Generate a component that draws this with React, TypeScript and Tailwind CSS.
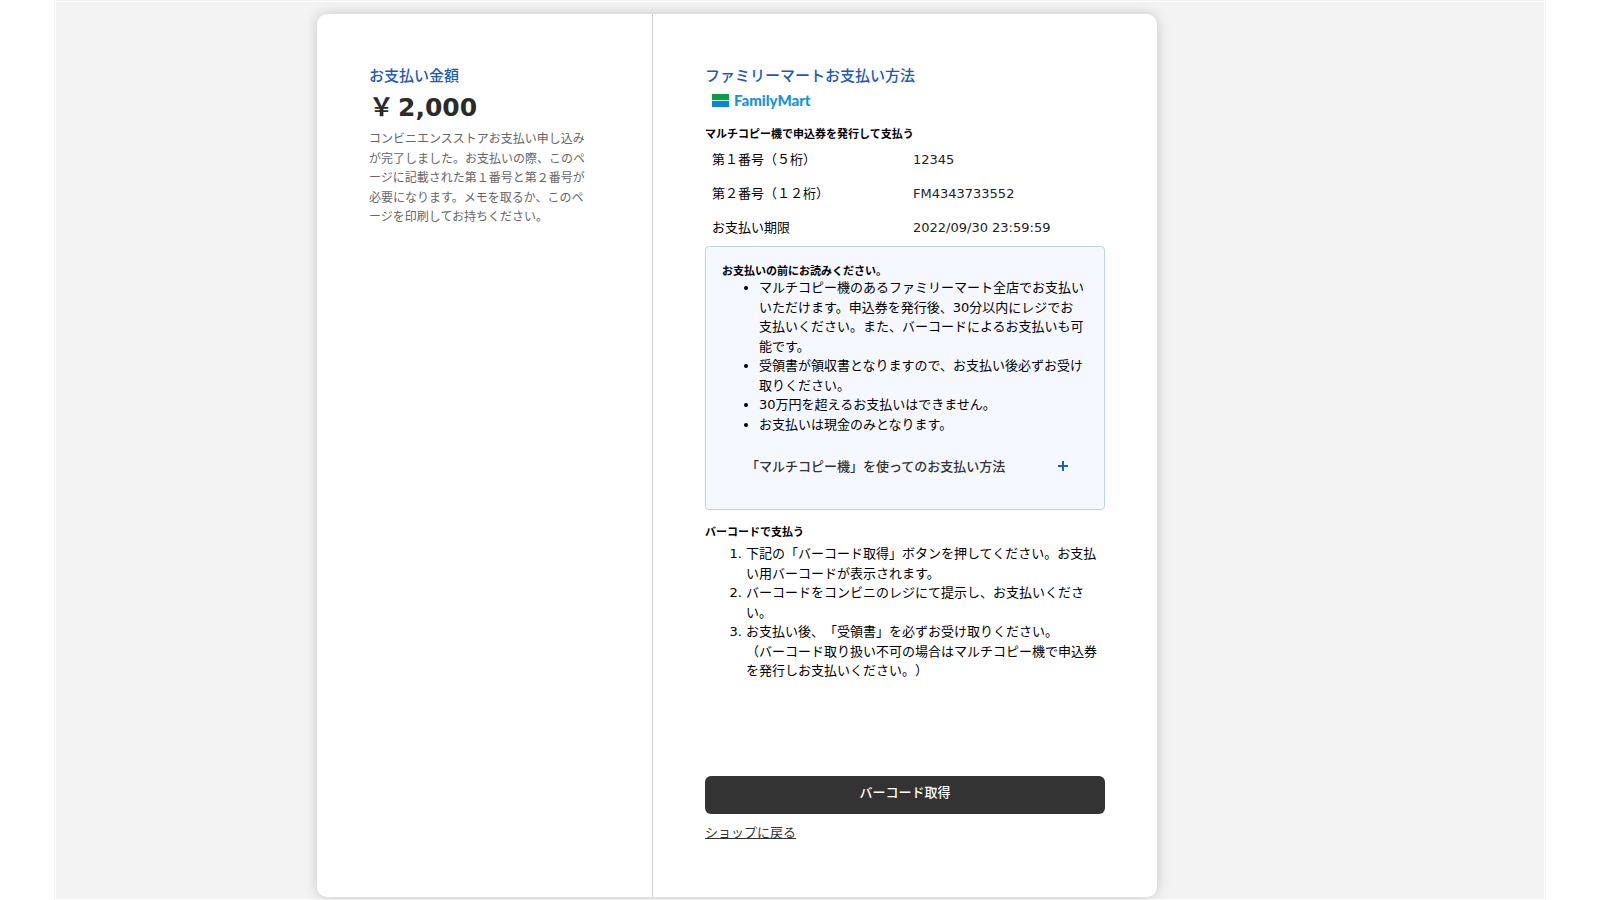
import { useState } from "react";

const paymentRows = [
  { label: "第１番号（５桁）", value: "12345" },
  { label: "第２番号（１２桁）", value: "FM4343733552" },
  { label: "お支払い期限", value: "2022/09/30 23:59:59" },
];

const notes = [
  "マルチコピー機のあるファミリーマート全店でお支払いいただけます。申込券を発行後、30分以内にレジでお支払いください。また、バーコードによるお支払いも可能です。",
  "受領書が領収書となりますので、お支払い後必ずお受け取りください。",
  "30万円を超えるお支払いはできません。",
  "お支払いは現金のみとなります。",
];

function FamilyMartLogo() {
  return (
    <div className="flex h-[26px] items-center gap-[5px] pl-[7px]">
      <svg width="17" height="13" viewBox="0 0 17 13" aria-hidden="true">
        <rect width="17" height="6" fill="#0a9f45" />
        <rect y="6" width="17" height="1" fill="#cfe9ea" />
        <rect y="7" width="17" height="6" fill="#0887d5" />
      </svg>
      <span className="font-['Lato',sans-serif] text-[15px] leading-5 font-black text-[#1593d8]">
        FamilyMart
      </span>
    </div>
  );
}

function NoticeBox() {
  const [open, setOpen] = useState(false);

  return (
    <div className="mt-px rounded border border-[#bdd5e3] bg-[#f5f8ff] px-4 pt-[19px] pb-[22px]">
      <h3 className="text-[11px] leading-3 font-bold">お支払いの前にお読みください。</h3>
      <ul className="list-disc pr-1 pl-[37px] leading-normal">
        {notes.map((note) => (
          <li key={note}>{note}</li>
        ))}
      </ul>
      <button
        type="button"
        aria-expanded={open}
        onClick={() => setOpen(!open)}
        className="mt-[13px] flex h-10 w-full items-center justify-between pr-5 pl-6 text-left font-medium text-[#333]"
      >
        <span>「マルチコピー機」を使ってのお支払い方法</span>
        <svg className="mb-0.5" width="10" height="10" viewBox="0 0 10 10" aria-hidden="true">
          <path d="M0 5h10M5 0v10" fill="none" stroke="#1d5fbf" strokeWidth="2" />
        </svg>
      </button>
    </div>
  );
}

export default function App() {
  return (
    <div
      lang="ja"
      className="min-h-screen bg-white px-[54px] font-['DejaVu_Sans','Noto_Sans_CJK_JP',sans-serif] text-[13px] text-black [text-spacing-trim:space-all]"
    >
      <div className="min-h-screen border border-[#f3f3f3] p-px">
        <div className="grid grid-cols-[261fr_840fr_387fr] bg-[#f3f3f3] pt-3 pb-0.5">
          <main className="col-start-2 flex rounded-[10px] bg-white shadow-[0_0_14px_rgba(0,0,0,0.18)]">
            <section className="w-2/5 border-r border-[#cfcfcf] pt-[51px] pr-16 pl-[52px]">
              <h2 className="text-[15px] leading-[22px] font-medium text-[#1a5ab8]">お支払い金額</h2>
              <p className="flex gap-1 text-[25px] leading-[42px] font-bold text-[#2b2b2b]">
                <span>￥</span>
                <span>2,000</span>
              </p>
              <p className="mt-px text-xs leading-relaxed break-all text-[#666]">
                コンビニエンスストアお支払い申し込みが完了しました。お支払いの際、このページに記載された第１番号と第２番号が必要になります。メモを取るか、このページを印刷してお持ちください。
              </p>
            </section>

            <section className="w-3/5 px-[52px] pt-[51px] pb-[53px]">
              <h2 className="text-[15px] leading-[22px] font-medium text-[#1a5ab8]">
                ファミリーマートお支払い方法
              </h2>
              <FamilyMartLogo />

              <h3 className="mt-[14px] text-[11px] leading-4 font-bold">
                マルチコピー機で申込券を発行して支払う
              </h3>
              <table className="w-full text-left">
                <tbody>
                  {paymentRows.map((row) => (
                    <tr key={row.label} className="h-[34px]">
                      <th scope="row" className="w-1/2 pl-[7px] font-normal">
                        {row.label}
                      </th>
                      <td className="pl-2 text-[#222]">{row.value}</td>
                    </tr>
                  ))}
                </tbody>
              </table>

              <NoticeBox />

              <h3 className="mt-[15px] text-[11px] leading-4 font-bold">バーコードで支払う</h3>
              <ol className="mt-[3px] list-decimal pl-[41px] leading-normal">
                <li>下記の「バーコード取得」ボタンを押してください。お支払い用バーコードが表示されます。</li>
                <li>バーコードをコンビニのレジにて提示し、お支払いください。</li>
                <li>
                  お支払い後、「受領書」を必ずお受け取りください。
                  <br />
                  （バーコード取り扱い不可の場合はマルチコピー機で申込券を発行しお支払いください。）
                </li>
              </ol>

              <button
                type="button"
                className="mt-[95px] h-[38px] w-full rounded-md bg-[#333] pb-1 font-medium text-white"
              >
                バーコード取得
              </button>
              <p className="mt-2 leading-[22px]">
                <a href="#shop" className="text-[#333] underline">
                  ショップに戻る
                </a>
              </p>
            </section>
          </main>
        </div>
      </div>
    </div>
  );
}
